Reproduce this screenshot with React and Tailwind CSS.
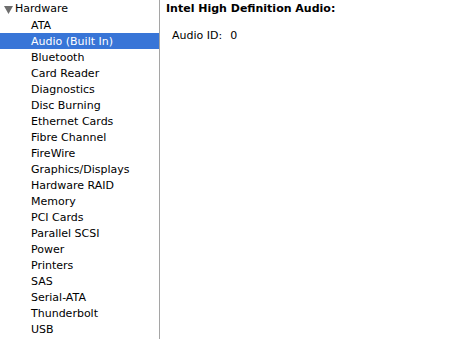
import React from 'react';

const items = [
  'ATA', 'Audio (Built In)', 'Bluetooth', 'Card Reader', 'Diagnostics', 'Disc Burning',
  'Ethernet Cards', 'Fibre Channel', 'FireWire', 'Graphics/Displays', 'Hardware RAID',
  'Memory', 'PCI Cards', 'Parallel SCSI', 'Power', 'Printers', 'SAS', 'Serial-ATA',
  'Thunderbolt', 'USB',
];

const App = () => (
  <div className="flex h-[339px] w-[476px] bg-white text-[11px] text-black" style={{ fontFamily: '"DejaVu Sans", sans-serif' }}>
    <div className="w-[159px] shrink-0 pt-px">
      <div className="flex h-4 items-center pl-[4px] pt-px">
        <svg width="9" height="8" viewBox="0 0 9 8" className="mr-[2px]">
          <path d="M0 0 H9 L4.5 8 Z" fill="#6e6e6e" />
        </svg>
        <span>Hardware</span>
      </div>
      {items.map((t, i) => (
        <div key={t} className={`flex h-4 items-center pl-[31px] pt-[2px] ${i === 1 ? 'bg-[#3875d7] text-white' : ''}`}>
          {t}
        </div>
      ))}
    </div>
    <div className="w-px shrink-0 bg-[#a5a5a5]" />
    <div className="flex-1 pl-[6px]">
      <div className="flex h-4 items-center pt-[2px] font-bold">Intel High Definition Audio:</div>
      <div className="mt-[11px] flex h-4 items-center pl-[6px] pt-[2px]">
        <span>Audio ID:</span>
        <span className="ml-[8px]">0</span>
      </div>
    </div>
  </div>
);

export default App;
